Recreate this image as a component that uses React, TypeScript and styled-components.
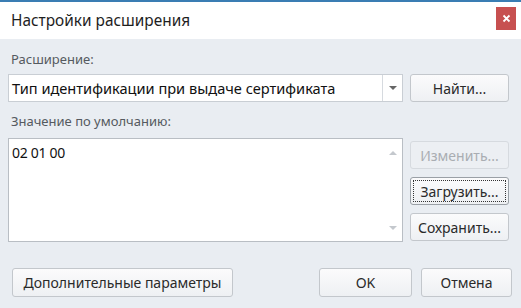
import React from 'react';
import styled, { createGlobalStyle, css } from 'styled-components';

const GlobalStyle = createGlobalStyle`
  html, body {
    margin: 0;
    padding: 0;
    background: #e9edf2;
  }
  body {
    font-family: "Noto Sans", "Open Sans", sans-serif;
  }
`;

const Window = styled.div`
  width: 521px;
  height: 308px;
  display: flex;
  flex-direction: column;
  background: #e9edf2;
  border-top: 2px solid #3a7db3;
  box-sizing: border-box;
  overflow: hidden;
`;

const TitleBar = styled.div`
  height: 37px;
  display: flex;
  align-items: center;
  background: #ffffff;
  padding-left: 11px;
  flex-shrink: 0;
`;

const Title = styled.span`
  font-size: 15.4px;
  color: #1e1e1e;
  flex-grow: 1;
  margin-top: -1px;
`;

const CloseButton = styled.div`
  width: 20px;
  height: 23px;
  margin-right: 5px;
  margin-top: -4px;
  background: #c75050;
  display: flex;
  align-items: center;
  justify-content: center;
`;

const Body = styled.div`
  display: flex;
  flex-direction: column;
  padding: 9px 12px 0 8px;
`;

const Label = styled.div<{ $top?: number; $h?: number }>`
  font-size: 13px;
  color: #555a60;
  padding-left: 3px;
  margin-top: ${p => p.$top || 0}px;
  height: ${p => p.$h || 26}px;
  line-height: 22px;
`;

const Row = styled.div`
  display: flex;
  gap: 7px;
`;

const Combo = styled.div`
  width: 395px;
  height: 28px;
  box-sizing: border-box;
  background: #ffffff;
  border: 1px solid #c9ced4;
  display: flex;
  align-items: center;
`;

const ComboText = styled.span`
  flex-grow: 1;
  font-size: 14.6px;
  color: #111;
  padding-left: 3px;
`;

const ComboArrow = styled.div`
  width: 19px;
  height: 100%;
  border-left: 1px solid #d6dadf;
  display: flex;
  align-items: center;
  justify-content: center;
`;

const Triangle = styled.div<{ $up?: boolean; $color?: string }>`
  width: 0;
  height: 0;
  border-left: 4px solid transparent;
  border-right: 4px solid transparent;
  ${p =>
    p.$up
      ? css`border-bottom: 4px solid ${p.$color || '#555'};`
      : css`border-top: 4px solid ${p.$color || '#555'};`}
`;

const Button = styled.div<{ $w: number; $h?: number; $disabled?: boolean; $focused?: boolean }>`
  width: ${p => p.$w}px;
  height: ${p => p.$h || 28}px;
  box-sizing: border-box;
  border: 1px solid ${p => (p.$disabled ? '#d6dadf' : p.$focused ? '#9aa0a6' : '#c3c7cc')};
  border-radius: 3px;
  background: ${p => (p.$disabled ? '#eceff3' : 'linear-gradient(#fbfbfc, #eef0f3)')};
  color: ${p => (p.$disabled ? '#a9adb2' : '#2a2a2a')};
  font-size: 14px;
  display: flex;
  align-items: center;
  justify-content: center;
  position: relative;
  ${p =>
    p.$focused &&
    css`
      &::after {
        content: '';
        position: absolute;
        inset: 2px;
        border: 1px dotted #333;
      }
    `}
`;

const ValueArea = styled.div`
  width: 395px;
  height: 104px;
  box-sizing: border-box;
  background: #ffffff;
  border: 1px solid #b9bec4;
  display: flex;
`;

const ValueText = styled.div`
  flex-grow: 1;
  font-size: 14px;
  letter-spacing: -0.3px;
  color: #111;
  padding: 4px 3px;
`;

const ScrollBar = styled.div`
  width: 19px;
  display: flex;
  flex-direction: column;
  justify-content: space-between;
  align-items: center;
  padding: 12px 0 11px;
`;

const ButtonColumn = styled.div`
  display: flex;
  flex-direction: column;
  gap: 8px;
  padding-top: 3px;
`;

const Footer = styled.div`
  display: flex;
  align-items: center;
  padding: 26px 9px 0 12px;
`;

const Spacer = styled.div`
  flex-grow: 1;
`;

const FooterGap = styled.div`
  width: 9px;
`;

export default function App() {
  return (
    <>
      <GlobalStyle />
      <Window>
        <TitleBar>
          <Title>Настройки расширения</Title>
          <CloseButton>
            <svg width="9" height="9" viewBox="0 0 9 9">
              <path d="M1.5 1.5 L7.5 7.5 M7.5 1.5 L1.5 7.5" stroke="#fff" strokeWidth="1.8" />
            </svg>
          </CloseButton>
        </TitleBar>
        <Body>
          <Label>Расширение:</Label>
          <Row>
            <Combo>
              <ComboText>Тип идентификации при выдаче сертификата</ComboText>
              <ComboArrow>
                <Triangle $color="#666" />
              </ComboArrow>
            </Combo>
            <Button $w={99}>Найти...</Button>
          </Row>
          <Label $top={8} $h={28}>Значение по умолчанию:</Label>
          <Row>
            <ValueArea>
              <ValueText>02 01 00</ValueText>
              <ScrollBar>
                <Triangle $up $color="#c4c8cd" />
                <Triangle $color="#c4c8cd" />
              </ScrollBar>
            </ValueArea>
            <ButtonColumn>
              <Button $w={99} $disabled>Изменить...</Button>
              <Button $w={99} $focused>Загрузить...</Button>
              <Button $w={99}>Сохранить...</Button>
            </ButtonColumn>
          </Row>
        </Body>
        <Footer>
          <Button $w={221} $h={29}>Дополнительные параметры</Button>
          <Spacer />
          <Button $w={93} $h={29}>OK</Button>
          <FooterGap />
          <Button $w={91} $h={29}>Отмена</Button>
        </Footer>
      </Window>
    </>
  );
}
